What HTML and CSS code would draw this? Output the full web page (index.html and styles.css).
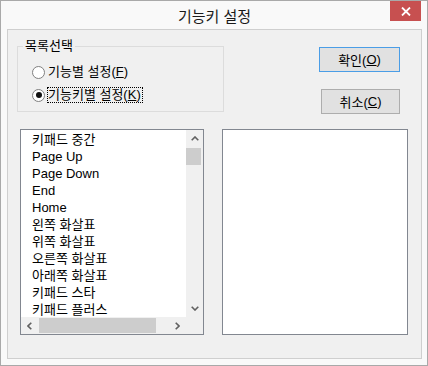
FILE: index.html
```html
<!DOCTYPE html>
<html lang="ko">
<head>
    <meta charset="UTF-8">
    <meta name="viewport" content="width=device-width, initial-scale=1.0">
    <title>기능키 설정</title>
    <link rel="stylesheet" href="styles.css">
</head>
<body>
    <div class="window">
        <!-- 제목 표시줄 -->
        <div class="titlebar">
            <div class="title-spacer"></div>
            <div class="title">기능키 설정</div>
            <div class="btn-close">
                <svg width="10" height="9" viewBox="0 0 10 9">
                    <path d="M1 0.5 L9 8.5 M9 0.5 L1 8.5" stroke="#fff" stroke-width="1.8" fill="none"/>
                </svg>
            </div>
        </div>

        <div class="client">
            <!-- 목록 선택 + 버튼 -->
            <div class="top-row">
                <fieldset class="group">
                    <legend>목록선택</legend>
                    <div class="radio-list">
                        <label class="radio-row">
                            <span class="radio"></span>
                            <span class="radio-text">기능별 설정(<u>F</u>)</span>
                        </label>
                        <label class="radio-row">
                            <span class="radio checked"></span>
                            <span class="radio-text focused">기능키별 설정(<u>K</u>)</span>
                        </label>
                    </div>
                </fieldset>

                <div class="buttons">
                    <div class="btn btn-default">확인(<u>O</u>)</div>
                    <div class="btn btn-cancel">취소(<u>C</u>)</div>
                </div>
            </div>

            <!-- 키 목록 -->
            <div class="bottom-row">
                <div class="listbox">
                    <ul class="items">
                        <li>키패드 중간</li>
                        <li>Page Up</li>
                        <li>Page Down</li>
                        <li>End</li>
                        <li>Home</li>
                        <li>왼쪽 화살표</li>
                        <li>위쪽 화살표</li>
                        <li>오른쪽 화살표</li>
                        <li>아래쪽 화살표</li>
                        <li>키패드 스타</li>
                        <li>키패드 플러스</li>
                    </ul>
                    <div class="vscroll">
                        <div class="arrow">
                            <svg width="8" height="5" viewBox="0 0 8 5"><polyline points="0.7,4.3 4,1 7.3,4.3" stroke="#606060" stroke-width="1.6" fill="none"/></svg>
                        </div>
                        <div class="thumb-v"></div>
                        <div class="track"></div>
                        <div class="arrow">
                            <svg width="8" height="5" viewBox="0 0 8 5"><polyline points="0.7,0.7 4,4 7.3,0.7" stroke="#606060" stroke-width="1.6" fill="none"/></svg>
                        </div>
                    </div>
                    <div class="hscroll">
                        <div class="arrow">
                            <svg width="5" height="8" viewBox="0 0 5 8"><polyline points="4.3,0.7 1,4 4.3,7.3" stroke="#606060" stroke-width="1.6" fill="none"/></svg>
                        </div>
                        <div class="thumb-h"></div>
                        <div class="track"></div>
                        <div class="arrow">
                            <svg width="5" height="8" viewBox="0 0 5 8"><polyline points="0.7,0.7 4,4 0.7,7.3" stroke="#606060" stroke-width="1.6" fill="none"/></svg>
                        </div>
                    </div>
                    <div class="corner"></div>
                </div>

                <div class="listbox-empty"></div>
            </div>
        </div>
    </div>
</body>
</html>
```

FILE: styles.css
```css
/* 기능키 설정 대화상자 */
body {
    margin: 0;
    font-family: "Liberation Sans", "Noto Sans CJK KR", sans-serif;
    font-size: 13px;
    color: #000;
}

/* 창 틀 */
.window {
    width: 428px;
    height: 366px;
    box-sizing: border-box;
    border: 1px solid #a9a9a9;
    background-color: #f9f9f9;
    padding: 0 5px 6px 6px;
    display: flex;
    flex-direction: column;
}

.titlebar {
    height: 28px;
    display: flex;
}

.title-spacer {
    width: 32px;
}

.title {
    flex: 1;
    text-align: center;
    font-family: "Noto Sans CJK KR", sans-serif;
    font-size: 15px;
    line-height: 29px;
    color: #1a1a1a;
}

.btn-close {
    width: 31px;
    height: 20px;
    margin-right: 1px;
    background-color: #c75050;
    display: flex;
    align-items: center;
    justify-content: center;
}

/* 클라이언트 영역 */
.client {
    flex: 1;
    border: 1px solid #cfcfcf;
    background-color: #f0f0f0;
    padding: 9px 21px 0 9px;
}

.top-row {
    display: flex;
    justify-content: space-between;
    align-items: flex-start;
}

/* 그룹 박스 */
.group {
    width: 207px;
    box-sizing: border-box;
    margin: 0;
    padding: 11px 0 8px 5px;
    border: 1px solid #dcdcdc;
}

.group legend {
    padding: 0 2px;
    line-height: 14px;
}

.radio-list {
    padding-left: 9px;
    display: flex;
    flex-direction: column;
    gap: 7px;
}

.radio-row {
    display: flex;
    align-items: center;
    height: 16px;
}

.radio {
    width: 13px;
    height: 13px;
    box-sizing: border-box;
    border: 1px solid #808080;
    border-radius: 50%;
    background-color: #fff;
    margin-right: 2px;
    display: flex;
    align-items: center;
    justify-content: center;
}

.radio.checked::after {
    content: "";
    width: 6px;
    height: 6px;
    border-radius: 50%;
    background-color: #111;
}

.radio-text {
    border: 1px dotted transparent;
    padding: 0 1px 0 0;
    line-height: 14px;
}

.radio-text.focused {
    border-color: #000;
}

u {
    text-underline-offset: 1px;
}

/* 버튼 */
.buttons {
    display: flex;
    flex-direction: column;
    align-items: flex-end;
    padding-top: 8px;
    gap: 17px;
}

.btn {
    height: 25px;
    box-sizing: border-box;
    border: 1px solid #adadad;
    background-color: #e1e1e1;
    display: flex;
    align-items: center;
    justify-content: center;
}

.btn-default {
    width: 81px;
    border-color: #4a9de6;
}

.btn-cancel {
    width: 79px;
}

/* 목록 */
.bottom-row {
    display: flex;
    gap: 18px;
    margin-top: 15px;
    padding-left: 3px;
}

.listbox {
    width: 184px;
    height: 206px;
    flex-shrink: 0;
    box-sizing: border-box;
    border: 1px solid #828790;
    background-color: #fff;
    display: grid;
    grid-template-columns: 1fr 17px;
    grid-template-rows: 1fr 17px;
}

.items {
    list-style: none;
    margin: 0;
    padding: 1px 0 0 11px;
    overflow: hidden;
}

.items li {
    height: 17px;
    line-height: 17px;
    white-space: nowrap;
}

.vscroll {
    background-color: #f0f0f0;
    display: flex;
    flex-direction: column;
}

.hscroll {
    background-color: #f0f0f0;
    display: flex;
    align-items: center;
}

.arrow {
    width: 17px;
    height: 17px;
    display: flex;
    align-items: center;
    justify-content: center;
    flex-shrink: 0;
}

.track {
    flex: 1;
}

.thumb-v {
    width: 15px;
    height: 17px;
    margin-top: 1px;
    background-color: #cdcdcd;
}

.thumb-h {
    width: 117px;
    height: 15px;
    margin-left: 1px;
    background-color: #cdcdcd;
}

.corner {
    background-color: #f0f0f0;
}

.listbox-empty {
    width: 186px;
    height: 206px;
    flex-shrink: 0;
    box-sizing: border-box;
    border: 1px solid #828790;
    background-color: #fff;
}
```
